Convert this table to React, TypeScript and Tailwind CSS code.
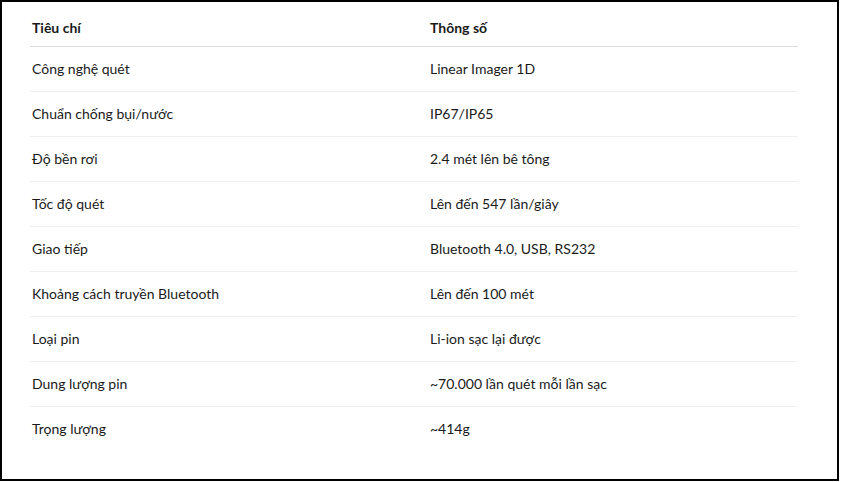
const specs = [
  { label: 'Công nghệ quét', value: 'Linear Imager 1D' },
  { label: 'Chuẩn chống bụi/nước', value: 'IP67/IP65' },
  { label: 'Độ bền rơi', value: '2.4 mét lên bê tông' },
  { label: 'Tốc độ quét', value: 'Lên đến 547 lần/giây' },
  { label: 'Giao tiếp', value: 'Bluetooth 4.0, USB, RS232' },
  { label: 'Khoảng cách truyền Bluetooth', value: 'Lên đến 100 mét' },
  { label: 'Loại pin', value: 'Li-ion sạc lại được' },
  { label: 'Dung lượng pin', value: '~70.000 lần quét mỗi lần sạc' },
  { label: 'Trọng lượng', value: '~414g' },
];

export default function App() {
  return (
    <div
      className="w-[839px] h-[481px] border-2 border-black bg-white pt-[8px] pl-[28px] text-[#1a1a1a]"
      style={{ fontFamily: 'Lato, "Noto Sans", sans-serif' }}
    >
      <table className="w-[768px] border-collapse text-[14px] leading-5">
        <thead>
          <tr className="border-b border-[#dcdcdc]">
            <th className="w-[398px] py-2 pl-[2px] text-left font-bold">Tiêu chí</th>
            <th className="py-2 pl-[2px] text-left font-bold">Thông số</th>
          </tr>
        </thead>
        <tbody>
          {specs.map((s, i) => (
            <tr key={s.label} className={i < specs.length - 1 ? 'border-b border-[#efefef]' : ''}>
              <td className="py-3 pl-[2px]">{s.label}</td>
              <td className="py-3 pl-[2px]">{s.value}</td>
            </tr>
          ))}
        </tbody>
      </table>
    </div>
  );
}
